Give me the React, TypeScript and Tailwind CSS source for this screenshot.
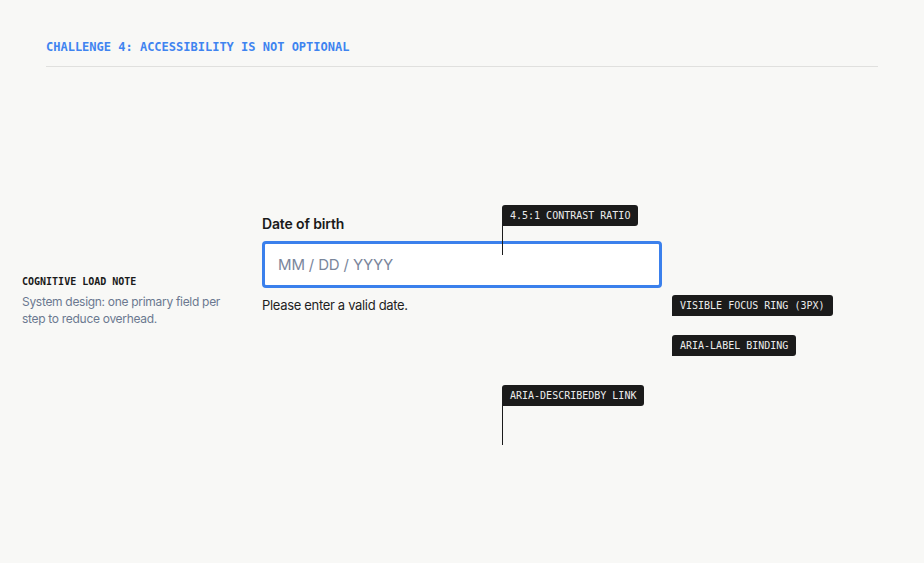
import React from 'react';

const mono = { fontFamily: '"DejaVu Sans Mono", "Liberation Mono", monospace' };
const sans = { fontFamily: 'Inter, "Noto Sans", sans-serif' };

function Tag({ text }: { text: string }) {
  return (
    <div
      style={mono}
      className="w-fit whitespace-nowrap rounded-[3px] rounded-bl-none bg-[#1b1b1b] px-2 py-1 text-[10px] leading-[13px] font-medium text-[#ececec]"
    >
      {text}
    </div>
  );
}

export default function App() {
  return (
    <div style={sans} className="min-h-screen w-full bg-[#f8f8f6] text-[#1a1a1a]">
      {/* Header */}
      <header className="mx-[46px] border-b border-[#e0e0de] pt-[39px] pb-[11px]">
        <h1 style={mono} className="text-[12px] leading-4 font-bold text-[#3f84f0]">
          CHALLENGE 4: ACCESSIBILITY IS NOT OPTIONAL
        </h1>
      </header>

      <main className="mt-[147px] grid grid-cols-[262px_400px_1fr]">
        {/* Side note */}
        <aside className="pl-[22px] pt-[61px]">
          <p style={mono} className="text-[10px] leading-[14px] font-bold text-[#1a1a1a]">
            COGNITIVE LOAD NOTE
          </p>
          <p className="mt-[4px] w-[205px] text-[12px] leading-[17px] tracking-[-0.025em] text-[#6b7890]">
            System design: one primary field per step to reduce overhead.
          </p>
        </aside>

        {/* Field */}
        <div className="relative">
          <label htmlFor="dob" className="block text-[14px] leading-5 font-semibold tracking-[-0.01em] text-[#1a1a1a]">
            Date of birth
          </label>
          <input
            id="dob"
            aria-describedby="dob-hint"
            placeholder="MM / DD / YYYY"
            className="mt-[7px] block h-[47px] w-full rounded-[4px] border-[3px] border-[#3b80ec] bg-white px-[13px] text-[15px] tracking-[-0.01em] text-[#1a1a1a] outline-none placeholder:text-[#7a869b]"
          />
          <p id="dob-hint" className="mt-[8px] text-[13px] leading-[18px] tracking-[-0.025em] text-[#1f1f1f]">
            Please enter a valid date.
          </p>

          {/* Annotations */}
          <div className="absolute left-[240px] top-[-9px] flex flex-col">
            <Tag text="4.5:1 CONTRAST RATIO" />
            <div className="h-[29px] w-px bg-[#1b1b1b]" />
          </div>
          <div className="absolute left-[410px] top-[81px] flex flex-col gap-[19px]">
            <Tag text="VISIBLE FOCUS RING (3PX)" />
            <Tag text="ARIA-LABEL BINDING" />
          </div>
          <div className="absolute left-[240px] top-[171px] flex flex-col">
            <Tag text="ARIA-DESCRIBEDBY LINK" />
            <div className="h-[39px] w-px bg-[#1b1b1b]" />
          </div>
        </div>
      </main>
    </div>
  );
}
